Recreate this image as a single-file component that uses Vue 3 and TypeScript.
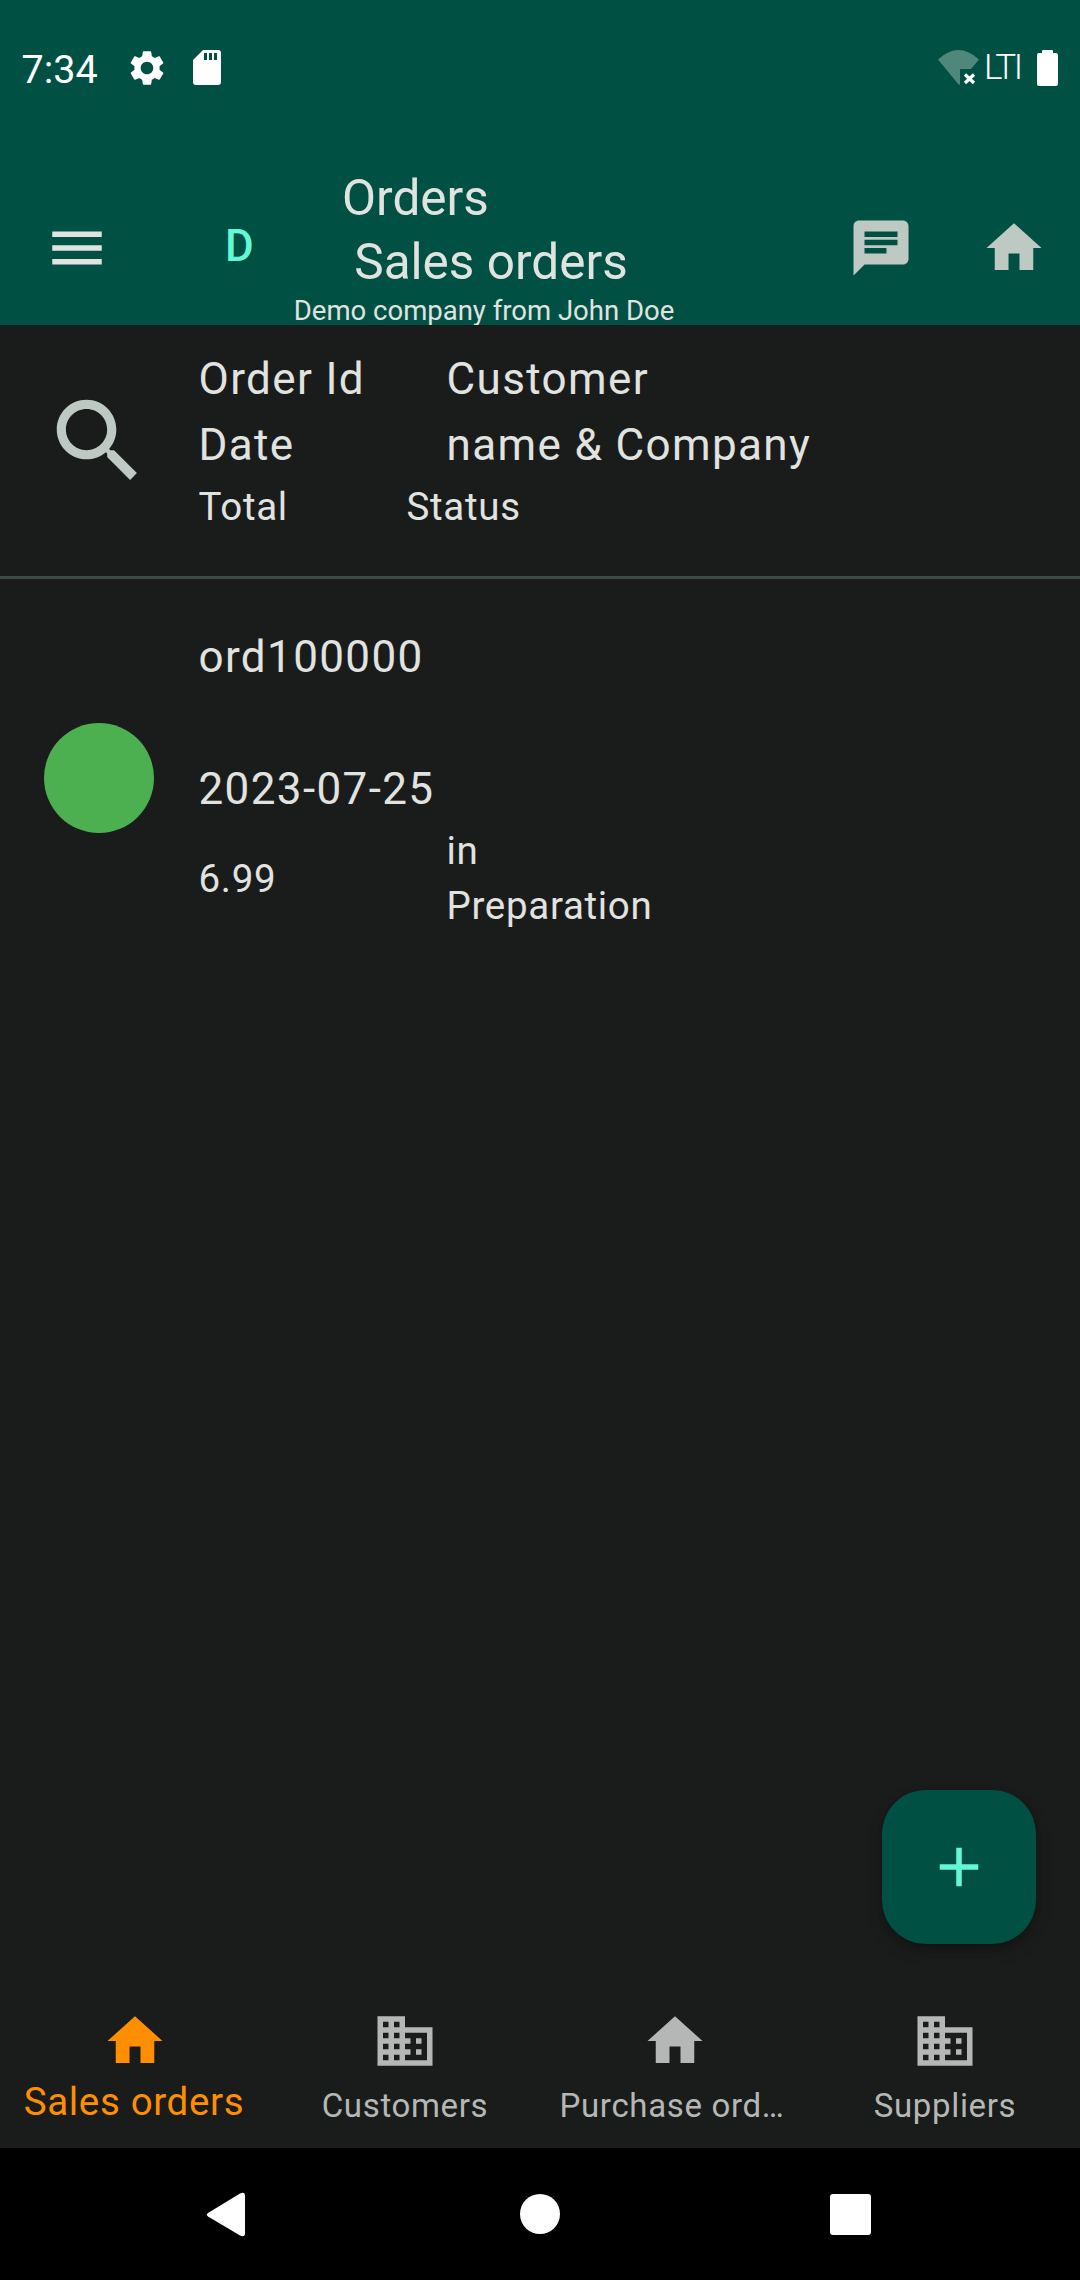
<script setup lang="ts">
interface Tab { label: string; icon: string; active?: boolean; shift?: boolean }
const homePath = 'M10 20v-6h4v6h5v-8h3L12 3 2 12h3v8z'
const domainPath = 'M12 7V3H2v18h20V7H12zM6 19H4v-2h2v2zm0-4H4v-2h2v2zm0-4H4V9h2v2zm0-4H4V5h2v2zm4 12H8v-2h2v2zm0-4H8v-2h2v2zm0-4H8V9h2v2zm0-4H8V5h2v2zm10 12h-8v-2h2v-2h-2v-2h2v-2h-2V9h8v10zm-2-8h-2v2h2v-2zm0 4h-2v2h2v-2z'
const tabs: Tab[] = [
  { label: 'Sales orders', icon: homePath, active: true },
  { label: 'Customers', icon: domainPath },
  { label: 'Purchase ord…', icon: homePath, shift: true },
  { label: 'Suppliers', icon: domainPath }
]
</script>

<template>
  <div class="app">
    <header class="top">
      <div class="status">
        <span class="time">7:34</span>
        <svg class="gear" viewBox="0 0 24 24" fill="#fff"><path d="M19.14 12.94c.04-.3.06-.61.06-.94 0-.32-.02-.64-.07-.94l2.03-1.58c.18-.14.23-.41.12-.61l-1.92-3.32c-.12-.22-.37-.29-.59-.22l-2.39.96c-.5-.38-1.03-.7-1.62-.94l-.36-2.54c-.04-.24-.24-.41-.48-.41h-3.84c-.24 0-.43.17-.47.41l-.36 2.54c-.59.24-1.13.57-1.62.94l-2.39-.96c-.22-.08-.47 0-.59.22L2.74 8.87c-.12.21-.08.47.12.61l2.03 1.58c-.05.3-.09.63-.09.94s.02.64.07.94l-2.03 1.58c-.18.14-.23.41-.12.61l1.92 3.32c.12.22.37.29.59.22l2.39-.96c.5.38 1.03.7 1.62.94l.36 2.54c.05.24.24.41.48.41h3.84c.24 0 .44-.17.47-.41l.36-2.54c.59-.24 1.13-.56 1.62-.94l2.39.96c.22.08.47 0 .59-.22l1.92-3.32c.12-.22.07-.47-.12-.61l-2.01-1.58zM12 15.6c-1.98 0-3.6-1.62-3.6-3.6s1.62-3.6 3.6-3.6 3.6 1.62 3.6 3.6-1.62 3.6-3.6 3.6z"/></svg>
        <svg class="sd" viewBox="0 0 28 35" fill="#fff"><path fill-rule="evenodd" d="M10 0H25a3 3 0 0 1 3 3V32a3 3 0 0 1-3 3H3a3 3 0 0 1-3-3V10zM11 3V10H14V3zM16 3V10H19V3zM21 3V10H24V3z"/></svg>
        <svg class="wifi" viewBox="0 0 41 35"><path fill="#4f877b" d="M0 9.500Q20.500-9.500 41 9.500L33 19H22V34L21 35Z"/><path stroke="#fff" stroke-width="3.200" d="M27 24.500L36 33M36 24.500L27 33"/></svg>
        <span class="lte">LTI</span>
        <svg class="battery" viewBox="0 0 21 36" fill="#fff"><path d="M5 3V1a1 1 0 0 1 1-1h9a1 1 0 0 1 1 1V3h3a2 2 0 0 1 2 2V34a2 2 0 0 1-2 2H2a2 2 0 0 1-2-2V5a2 2 0 0 1 2-2z"/></svg>
      </div>
      <div class="toolbar">
        <svg class="icon menu" viewBox="0 0 24 24"><path d="M3 18h18v-2H3v2zm0-5h18v-2H3v2zm0-7v2h18V6H3z"/></svg>
        <span class="logo">D</span>
        <div class="titles">
          <div class="t1">Orders</div>
          <div class="t2">Sales orders</div>
          <div class="t3">Demo company from John Doe</div>
        </div>
        <svg class="icon action chat" viewBox="0 0 24 24"><path d="M20 2H4c-1.100 0-1.990.9-1.990 2L2 22l4-4h14c1.100 0 2-.9 2-2V4c0-1.100-.9-2-2-2zM6 9h12v2H6V9zm8 5H6v-2h8v2zm4-6H6V6h12v2z"/></svg>
        <svg class="icon action home" viewBox="0 0 24 24"><path :d="homePath"/></svg>
      </div>
    </header>

    <main class="main">
      <section class="list-head">
        <svg class="search" viewBox="0 0 24 24"><path d="M15.500 14h-.79l-.28-.27C15.410 12.590 16 11.110 16 9.500 16 5.910 13.090 3 9.500 3S3 5.910 3 9.500 5.910 16 9.500 16c1.610 0 3.090-.59 4.230-1.570l.27.28v.79l5 4.990L20.490 19l-4.990-5zm-6 0C7.010 14 5 11.990 5 9.500S7.010 5 9.500 5 14 7.010 14 9.500 11.990 14 9.500 14z"/></svg>
        <div class="cols">
          <div class="row lg"><span>Order Id</span><span>Customer</span></div>
          <div class="row lg"><span>Date</span><span>name &amp; Company</span></div>
          <div class="row md"><span>Total</span><span>Status</span></div>
        </div>
      </section>

      <section class="order">
        <div class="dot"></div>
        <div class="cols">
          <div class="row lg"><span>ord100000</span></div>
          <div class="row lg blank"></div>
          <div class="row lg"><span>2023-07-25</span></div>
          <div class="row item-md">
            <span>6.99</span>
            <span class="state">in<br>Preparation</span>
          </div>
        </div>
      </section>

      <button class="fab" type="button" aria-label="Add">
        <svg viewBox="0 0 24 24"><path d="M19 13h-6v6h-2v-6H5v-2h6V5h2v6h6v2z"/></svg>
      </button>
    </main>

    <nav class="tabs">
      <div v-for="tab in tabs" :key="tab.label" class="tab" :class="{ active: tab.active, shift: tab.shift }">
        <svg viewBox="0 0 24 24"><path :d="tab.icon"/></svg>
        <span>{{ tab.label }}</span>
      </div>
    </nav>

    <footer class="sysnav">
      <svg class="back" viewBox="0 0 39 45"><path fill="#fff" d="M2 21L34 1.500Q39-1 39 4V41Q39 46 34 43.500L2 24.500Q-.5 22.800 2 21Z"/></svg>
      <span class="circle"></span>
      <span class="square"></span>
    </footer>
  </div>
</template>

<style scoped>
.app {
  width: 1080px;
  height: 2280px;
  display: flex;
  flex-direction: column;
  background: #1a1c1b;
  color: #e1e3e0;
  font-family: Roboto, "Liberation Sans", sans-serif;
  overflow: hidden;
}
.top {
  height: 325px;
  background: #005144;
  overflow: hidden;
  flex: none;
}
.status {
  height: 135px;
  display: flex;
  align-items: center;
  padding: 0 22px 0 21.500px;
  color: #fff;
  box-sizing: border-box;
}
.time {
  width: 104px;
  font-size: 39.500px;
  line-height: 50px;
  margin-top: 4px;
}
.gear { width: 42px; height: 42px; }
.sd { width: 28px; height: 35px; margin-left: 25.500px; }
.wifi { width: 41px; height: 35px; margin-left: auto; }
.lte {
  width: 53px;
  margin-left: 5px;
  font-size: 35px;
  font-weight: 300;
  line-height: 40px;
  letter-spacing: -2.500px;
}
.battery { width: 21px; height: 36px; }
.toolbar {
  height: 190px;
  display: flex;
  align-items: flex-start;
  padding: 0 33px 0 44px;
}
.icon { width: 66px; height: 66px; flex: none; margin-top: 79.500px; }
.menu { fill: #e1e3e0; }
.action { fill: #bfc9c4; }
.home { margin-left: 67px; }
.logo {
  width: 69px;
  margin: 78px 0 0 115px;
  font-size: 44px;
  line-height: 66px;
  font-weight: 500;
  color: #64f9d6;
}
.titles {
  width: 380px;
  margin-right: auto;
  margin-top: 31px;
  display: flex;
  flex-direction: column;
  align-items: center;
  flex: none;
}
.t1, .t2 { font-size: 49.500px; line-height: 64px; }
.t1 { margin-right: 137px; }
.t2 { margin-left: 14px; }
.t3 { font-size: 27.500px; line-height: 34px; white-space: nowrap; }
.main {
  flex: 1;
  position: relative;
}
.list-head {
  height: 254px;
  display: flex;
  align-items: flex-start;
  padding: 20.500px 0 0 0;
  box-sizing: border-box;
  border-bottom: 3px solid #3f4946;
}
.search {
  width: 110px;
  height: 110px;
  flex: none;
  margin: 40.500px 45.500px 0 43px;
  fill: #bfc9c4;
}
.cols { display: flex; flex-direction: column; }
.row { display: grid; grid-template-columns: 248px auto; white-space: nowrap; }
.lg { font-size: 44px; line-height: 66px; letter-spacing: 1.375px; height: 66px; }
.md { font-size: 38.500px; line-height: 58px; letter-spacing: .69px; grid-template-columns: 208px auto; }
.order {
  display: flex;
  align-items: center;
  padding: 44.500px 0 0 44px;
}
.dot {
  width: 110px;
  height: 110px;
  border-radius: 50%;
  background: #4caf50;
  flex: none;
  margin-right: 44.500px;
}
.item-md {
  font-size: 38.500px;
  line-height: 55px;
  letter-spacing: .69px;
  align-items: center;
  margin-top: 1.500px;
}
.state { display: block; }
.fab {
  position: absolute;
  right: 44px;
  bottom: 36px;
  width: 154px;
  height: 154px;
  border: 0;
  padding: 0;
  border-radius: 44px;
  background: #005144;
  display: flex;
  align-items: center;
  justify-content: center;
  box-shadow: 0 8px 16px rgba(0, 0, 0, .18), 0 3px 6px rgba(0, 0, 0, .12);
}
.fab svg { width: 66px; height: 66px; fill: #64f9d6; }
.tabs {
  height: 168px;
  flex: none;
  display: grid;
  grid-template-columns: repeat(4, 270px);
  box-sizing: border-box;
  padding-top: 28px;
}
.tab {
  display: flex;
  flex-direction: column;
  align-items: center;
  color: #b5b7b6;
  fill: #b5b7b6;
  font-size: 33px;
  line-height: 63px;
  letter-spacing: .66px;
  white-space: nowrap;
}
.tab svg { width: 66px; height: 66px; flex: none; }
.tab.active {
  color: #ff8f00;
  fill: #ff8f00;
  font-size: 38.500px;
  line-height: 55px;
}
.tab.active span { margin-right: 2px; }
.tab.shift span { margin-right: 6px; }
.sysnav {
  height: 132px;
  flex: none;
  background: #000;
  display: flex;
  align-items: center;
  padding-left: 206px;
}
.back { width: 39px; height: 45px; }
.circle {
  width: 40px;
  height: 40px;
  border-radius: 50%;
  background: #fff;
  margin-left: 275px;
}
.square {
  width: 41px;
  height: 41px;
  border-radius: 3px;
  background: #fff;
  margin-left: 270px;
}
</style>
